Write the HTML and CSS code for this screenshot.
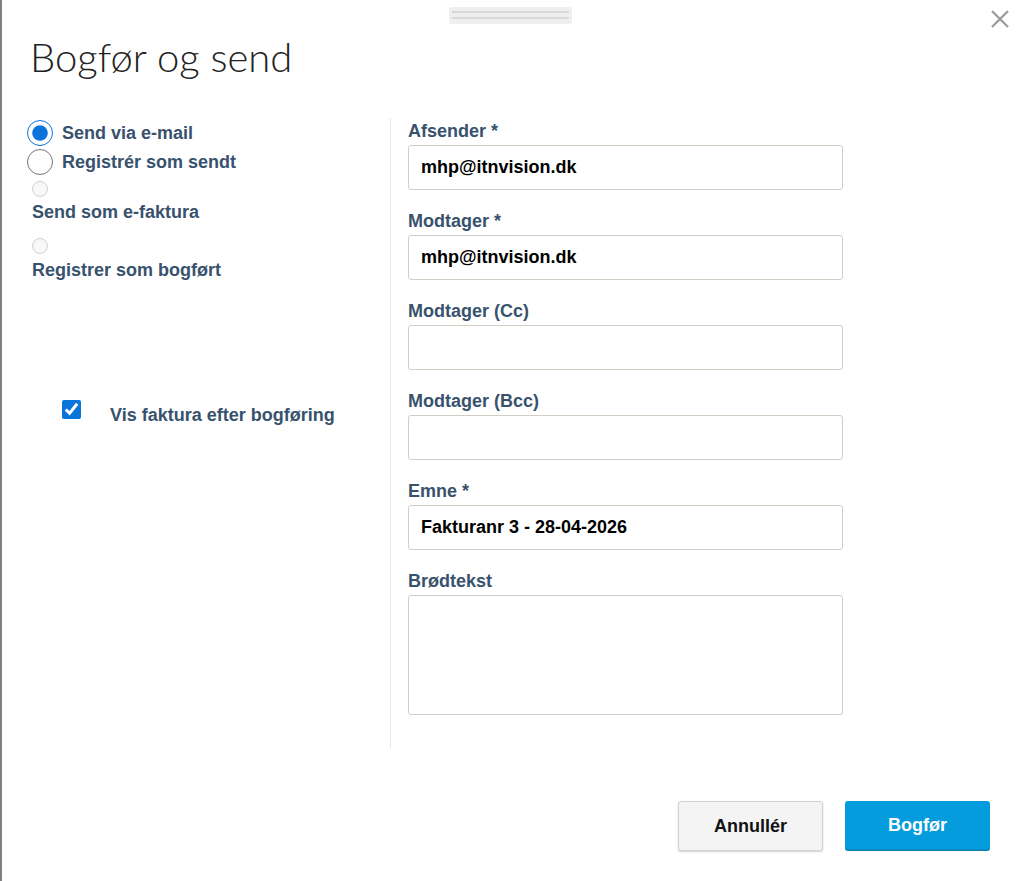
FILE: index.html
```html
<!doctype html>
<html>
    <head>
        <title>Bogfør og send</title>
        <meta charset="utf-8">
        <link rel="stylesheet" href="styles.css">
    </head>

    <body>
        <section class="modal">
            <div class="grip"></div>

            <button class="close" type="button" title="Luk">
                <svg width="18" height="18" viewBox="0 0 18 18">
                    <path d="M1 1 L17 17 M17 1 L1 17" stroke="#9a9a9a" stroke-width="2.2" fill="none" />
                </svg>
            </button>

            <h1 class="title">Bogfør og send</h1>

            <div class="content">
                <div class="options">
                    <label class="option">
                        <input class="radio-big" type="radio" name="mode" checked />
                        <span>Send via e-mail</span>
                    </label>
                    <label class="option second">
                        <input class="radio-big" type="radio" name="mode" />
                        <span>Registrér som sendt</span>
                    </label>

                    <input class="radio-small first-small" type="radio" name="mode" disabled />
                    <div class="option-text first-text">Send som e-faktura</div>

                    <input class="radio-small" type="radio" name="mode" disabled />
                    <div class="option-text">Registrer som bogført</div>

                    <label class="show-invoice">
                        <input class="check" type="checkbox" checked />
                        <span>Vis faktura efter bogføring</span>
                    </label>
                </div>

                <div class="fields">
                    <div class="field">
                        <label>Afsender *</label>
                        <input type="text" value="mhp@itnvision.dk" />
                    </div>
                    <div class="field">
                        <label>Modtager *</label>
                        <input type="text" value="mhp@itnvision.dk" />
                    </div>
                    <div class="field">
                        <label>Modtager (Cc)</label>
                        <input type="text" value="" />
                    </div>
                    <div class="field">
                        <label>Modtager (Bcc)</label>
                        <input type="text" value="" />
                    </div>
                    <div class="field">
                        <label>Emne *</label>
                        <input type="text" value="Fakturanr 3 - 28-04-2026" />
                    </div>
                    <div class="field">
                        <label>Brødtekst</label>
                        <textarea></textarea>
                    </div>
                </div>
            </div>

            <div class="footer">
                <button class="btn cancel" type="button">Annullér</button>
                <button class="btn primary" type="button">Bogfør</button>
            </div>
        </section>
    </body>
</html>
```

FILE: styles.css
```css
body{
    margin: 0px;
    padding: 0px;
    font-family: "Liberation Sans", Arial, sans-serif;
    background: #fff;
}

.modal{
    position: relative;
    box-sizing: border-box;
    min-height: 881px;
    padding-top: 7px;
    border-left: 2px solid #808080;
}

/* drag handle at the top */
.grip{
    box-sizing: border-box;
    width: 123px;
    height: 17px;
    margin: 0 auto;
    padding: 4px 3px 0 3px;
    background: #efefef;
    border-radius: 2px;
}

.grip::before,
.grip::after{
    content: "";
    display: block;
    height: 2px;
    background: #d8d8d8;
}

.grip::after{
    margin-top: 4px;
}

.close{
    position: absolute;
    top: 10px;
    right: 10px;
    padding: 0;
    border: none;
    background: none;
    cursor: pointer;
    line-height: 0;
}

.title{
    margin: 10px 0 0 28px;
    font-family: Lato, "Open Sans", sans-serif;
    font-weight: 300;
    font-size: 40px;
    line-height: 47px;
    color: #222;
}

.content{
    display: flex;
    margin-top: 37px;
}

/* left column: send options */
.options{
    box-sizing: border-box;
    width: 389px;
    padding: 2px 0 0 25px;
    border-right: 1px solid #e6e6e6;
    color: #38526e;
    font-weight: bold;
    font-size: 18px;
}

.option{
    display: flex;
    align-items: center;
    gap: 9px;
    height: 26px;
    cursor: pointer;
}

.option.second{
    margin-top: 3px;
}

input[type="radio"],
input[type="checkbox"]{
    margin: 0;
    accent-color: #0a74da;
}

.radio-big{
    width: 26px;
    height: 26px;
}

.radio-small{
    display: block;
    width: 16px;
    height: 16px;
    margin: 16px 0 0 5px !important;
}

.radio-small.first-small{
    margin-top: 6px !important;
}

.option-text{
    margin: 6px 0 0 5px;
    line-height: 20px;
}

.option-text.first-text{
    margin-top: 5px;
}

.show-invoice{
    display: flex;
    align-items: flex-start;
    gap: 29px;
    margin: 120px 0 0 35px;
    line-height: 20px;
}

.check{
    width: 19px;
    height: 19px;
}

.show-invoice span{
    margin-top: 5px;
}

/* right column: mail fields */
.fields{
    display: flex;
    flex-direction: column;
    gap: 21px;
    padding: 3px 0 33px 17px;
}

.field label{
    display: block;
    margin-bottom: 4px;
    line-height: 20px;
    font-size: 18px;
    font-weight: bold;
    color: #38526e;
}

.field input,
.field textarea{
    display: block;
    box-sizing: border-box;
    width: 435px;
    height: 45px;
    padding: 0 12px;
    border: 1px solid #cfcfc3;
    border-radius: 3px;
    font-family: "Liberation Sans", Arial, sans-serif;
    font-size: 18px;
    font-weight: bold;
    color: #000;
    outline: none;
}

.field textarea{
    height: 120px;
    resize: none;
}

.footer{
    display: flex;
    justify-content: flex-end;
    gap: 22px;
    margin-top: 53px;
    padding-right: 29px;
}

.btn{
    width: 145px;
    height: 50px;
    border-radius: 3px;
    font-family: "Liberation Sans", Arial, sans-serif;
    font-size: 18px;
    font-weight: bold;
    cursor: pointer;
}

.cancel{
    background: #f4f4f4;
    border: 1px solid #d2d2d2;
    box-shadow: 0 1px 2px rgba(0, 0, 0, 0.18);
    color: #111;
}

.primary{
    background: #049cdd;
    border: none;
    border-bottom: 2px solid #0b83bb;
    color: #fff;
}
```
